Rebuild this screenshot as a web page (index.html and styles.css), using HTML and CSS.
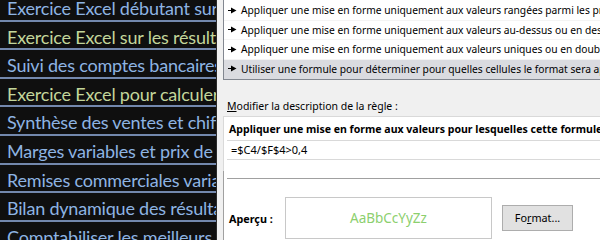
FILE: index.html
```html
<!DOCTYPE html>
<html lang="fr">
<head>
<meta charset="utf-8">
<link rel="stylesheet" href="styles.css">
</head>
<body>
<div class="page">
  <div class="left">
    <div class="rows">
      <div class="row blue">Exercice Excel débutant sur les fonctions</div>
      <div class="row green">Exercice Excel sur les résultats</div>
      <div class="row blue">Suivi des comptes bancaires</div>
      <div class="row green">Exercice Excel pour calculer</div>
      <div class="row blue">Synthèse des ventes et chiffres</div>
      <div class="row blue">Marges variables et prix de vente</div>
      <div class="row blue">Remises commerciales variables</div>
      <div class="row blue">Bilan dynamique des résultats</div>
      <div class="row blue">Comptabiliser les meilleurs</div>
    </div>
  </div>
  <div class="dialog">
    <div class="listbox">
      <div class="item"><svg class="arrow" width="9" height="7" viewBox="0 0 9 7"><path d="M0 3h3V0.5L8.5 3.5 3 6.5V4H0z" fill="#000"/></svg><span>Appliquer une mise en forme uniquement aux valeurs rangées parmi les premières ou les dernières valeurs</span></div>
      <div class="item"><svg class="arrow" width="9" height="7" viewBox="0 0 9 7"><path d="M0 3h3V0.5L8.5 3.5 3 6.5V4H0z" fill="#000"/></svg><span>Appliquer une mise en forme uniquement aux valeurs au-dessus ou en dessous de la moyenne</span></div>
      <div class="item"><svg class="arrow" width="9" height="7" viewBox="0 0 9 7"><path d="M0 3h3V0.5L8.5 3.5 3 6.5V4H0z" fill="#000"/></svg><span>Appliquer une mise en forme uniquement aux valeurs uniques ou en double</span></div>
      <div class="item selected"><svg class="arrow" width="9" height="7" viewBox="0 0 9 7"><path d="M0 3h3V0.5L8.5 3.5 3 6.5V4H0z" fill="#000"/></svg><span>Utiliser une formule pour déterminer pour quelles cellules le format sera appliqué</span></div>
    </div>
    <div class="label"><u>M</u>odifier la description de la règle :</div>
    <div class="panel">
      <div class="heading">Appliquer une mise en forme aux valeurs pour lesquelles cette formule est vraie :</div>
      <div class="formula">=$C4/$F$4&gt;0,4</div>
      <div class="lower">
        <div class="preview-row">
          <div class="apercu">Aperçu :</div>
          <div class="preview">AaBbCcYyZz</div>
          <div class="button">Fo<u>r</u>mat...</div>
        </div>
      </div>
    </div>
  </div>
</div>
</body>
</html>
```
FILE: styles.css
```css
html, body {
  margin: 0;
  padding: 0;
}
body {
  width: 600px;
  height: 240px;
  overflow: hidden;
  background: #f0f0f0;
}
.page {
  display: flex;
  width: 600px;
  height: 240px;
  overflow: hidden;
}
.left {
  width: 216px;
  flex: none;
  background: #0f0f0f;
  border-right: 1px solid #2a2a2a;
  overflow: hidden;
}
.rows {
  margin-top: -7px;
}
.row {
  height: 26.6px;
  line-height: 30px;
  border-bottom: 2px solid #7388ad;
  padding-left: 7px;
  font-family: Lato, "Liberation Sans", sans-serif;
  font-size: 18px;
  letter-spacing: -0.2px;
  white-space: nowrap;
  overflow: hidden;
}
.blue { color: #8eb4e3; }
.green { color: #c3d69b; }

.dialog {
  flex: 1;
  min-width: 0;
  background: #f0f0f0;
  padding-left: 6px;
  display: flex;
  flex-direction: column;
  font-family: "Noto Sans", "Liberation Sans", sans-serif;
  font-size: 10.4px;
  color: #000;
  overflow: hidden;
}
.listbox {
  background: #fff;
  border-left: 1px solid #828790;
  border-bottom: 1px solid #828790;
  padding-top: 1px;
}
.item {
  height: 19.5px;
  box-sizing: border-box;
  border-bottom: 1px solid #f4f4f4;
  display: flex;
  align-items: center;
  padding-left: 4px;
  gap: 4px;
  font-size: 10.25px;
  white-space: nowrap;
  overflow: hidden;
}
.item.selected {
  background: #dadbe0;
  border-bottom-color: #dadbe0;
}
.arrow {
  flex: none;
}
.label {
  margin-top: 18px;
  height: 16px;
  line-height: 16px;
  padding-left: 4px;
  font-size: 10.5px;
  white-space: nowrap;
}
.panel {
  margin-top: 2px;
  flex: 1;
  background: #fff;
  border-top: 1px solid #d9d9d9;
  border-left: 1px solid #d9d9d9;
  display: flex;
  flex-direction: column;
}
.heading {
  height: 23px;
  line-height: 25px;
  padding-left: 5px;
  font-weight: bold;
  font-size: 10.55px;
  white-space: nowrap;
  overflow: hidden;
}
.formula {
  margin-left: 3px;
  height: 18px;
  line-height: 18px;
  border-top: 1px solid #d9d9d9;
  border-bottom: 1px solid #d9d9d9;
  padding-left: 4px;
  font-size: 11px;
  white-space: nowrap;
}
.lower {
  margin-top: 11px;
  margin-left: -1px;
  flex: 1;
  border-left: 1px solid #a0a0a0;
  padding-top: 7px;
}
.preview-row {
  margin-left: 3px;
  border-top: 1px solid #a0a0a0;
  display: flex;
  align-items: center;
  padding-top: 18px;
}
.apercu {
  width: 56px;
  padding-left: 2px;
  font-weight: bold;
  font-size: 10.8px;
}
.preview {
  width: 205px;
  height: 40px;
  border: 1px solid #c8c8c8;
  display: flex;
  align-items: center;
  justify-content: center;
  color: #8ccf6e;
  font-size: 13.5px;
}
.button {
  margin-left: 10px;
  width: 69px;
  height: 24px;
  line-height: 24px;
  background: #e1e1e1;
  border: 1px solid #adadad;
  text-align: center;
  font-size: 10.8px;
}
```
